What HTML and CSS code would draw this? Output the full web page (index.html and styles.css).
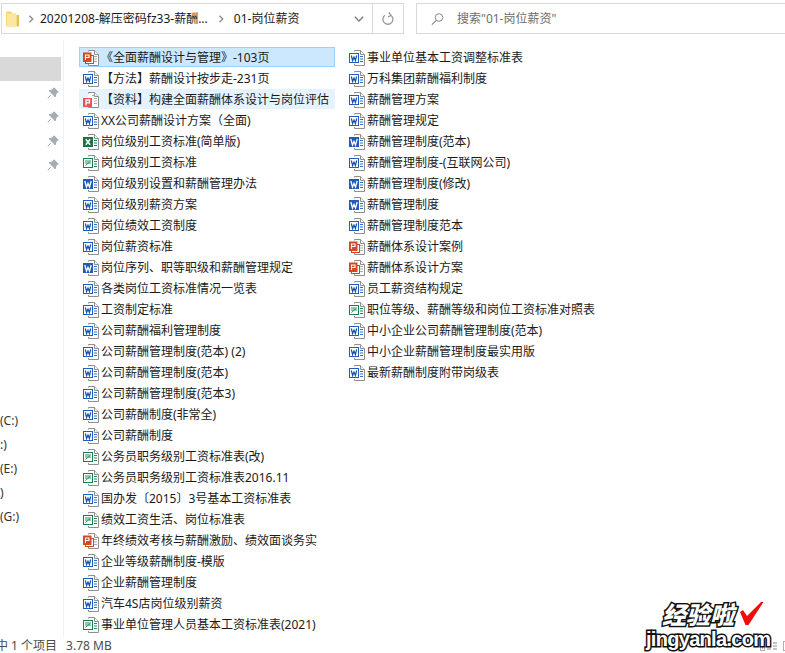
FILE: index.html
```html
<!DOCTYPE html>
<html lang="zh-CN">
<head>
<meta charset="utf-8">
<title>01-岗位薪资</title>
<link rel="stylesheet" href="styles.css">
</head>
<body>
<svg class="defs" width="0" height="0" aria-hidden="true">
  <defs>
    <g id="page">
      <path d="M5.500 1.500V.5H11.500L15.500 4.500V15.500H5.500V14" fill="#fff" stroke="#8f8f8f"/>
      <path d="M11.500 .5V4.500H15.500" fill="#f2f2f2" stroke="#8f8f8f"/>
    </g>
    <symbol id="wo" viewBox="0 0 16 16">
      <use href="#page"/>
      <path d="M11 6.500H14M11 9H14M11 11.500H14" stroke="#2b6fd0"/>
      <rect x=".5" y="3.500" width="9" height="9" fill="#fff" stroke="#1f5fc4"/>
      <path d="M2.300 5.500L3.600 10.500L5 7L6.400 10.500L7.700 5.500" fill="none" stroke="#1b4fa8" stroke-width="1.200"/>
    </symbol>
    <symbol id="ws" viewBox="0 0 16 16">
      <use href="#page"/>
      <path d="M11 6.500H14M11 9H14M11 11.500H14" stroke="#2b6fd0"/>
      <rect x="0" y="3" width="10" height="10" fill="#2559b8"/>
      <path d="M1.800 5L3.500 11L5 7.500L6.500 11L8.200 5" fill="none" stroke="#fff" stroke-width="1.300"/>
    </symbol>
    <symbol id="xs" viewBox="0 0 16 16">
      <use href="#page"/>
      <path d="M11 6.500H14M11 9H14M11 11.500H14" stroke="#1d8a52"/>
      <rect x="0" y="3" width="10" height="10" fill="#1b7343"/>
      <path d="M2.800 5.200L7.200 10.800M7.200 5.200L2.800 10.800" stroke="#fff" stroke-width="1.500"/>
    </symbol>
    <symbol id="xo" viewBox="0 0 16 16">
      <use href="#page"/>
      <path d="M11 6.500H14M11 9H14M11 11.500H14" stroke="#1d8a52"/>
      <rect x=".5" y="3.500" width="9" height="9" fill="#fff" stroke="#14804a"/>
      <path d="M2 6H8M2 8H8M2.500 10.500L7 6.500" fill="none" stroke="#2f8f5f"/>
    </symbol>
    <symbol id="pp" viewBox="0 0 16 16">
      <use href="#page"/>
      <path d="M11 6.500H14M11 9H14M11 11.500H14" stroke="#a9a9a9"/>
      <rect x="2.500" y="5.500" width="8" height="8" fill="#fff" stroke="#d24726"/>
      <rect x="0" y="2.500" width="8.500" height="9.500" fill="#cf4a25"/>
      <path d="M2.500 10V5H6V7.500H2.500" fill="none" stroke="#fff" stroke-width="1.100"/>
    </symbol>
    <symbol id="pr" viewBox="0 0 16 16">
      <use href="#page"/>
      <path d="M9 3.500H11M11 6.500H14M11 9H14M11 11.500H14" stroke="#a9a9a9"/>
      <rect x="0" y="6" width="9" height="9" fill="#e9505a"/>
      <path d="M3 13.500V8H6.500V10.800H3" fill="none" stroke="#fff" stroke-width="1.300"/>
    </symbol>
    <symbol id="pin" viewBox="0 0 12 12">
      <path d="M7 .8L11.200 5L9.800 5.600L8.600 7.800L8.300 9.800L2.200 3.700L4.200 3.400L6.400 2.200ZM4 7.800L.8 11.200" fill="#a3abb3" stroke="#a3abb3"/>
    </symbol>
    <symbol id="chev" viewBox="0 0 6 8">
      <path d="M1.500 .8L4.700 4L1.500 7.200" fill="none" stroke="#8a8a8a" stroke-width="1.300"/>
    </symbol>
  </defs>
</svg>

<div class="window">
  <header class="toolbar">
    <div class="address">
      <svg class="folder" viewBox="0 0 14 16" width="14" height="16">
        <path d="M0 1.500Q0 .5 1 .5H5L6.500 2.500H10V15.500H1Q0 15.500 0 14.500Z" fill="#f6d365"/>
        <path d="M.8 2.500H10.500V15H.8Z" fill="#fbe7a1"/>
        <path d="M10.500 4H13V15.500H10.500Z" fill="#e9bf4f"/>
      </svg>
      <svg class="crumb-sep first-sep" width="6" height="8"><use href="#chev"/></svg>
      <span class="crumb">20201208-解压密码fz33-薪酬...</span>
      <svg class="crumb-sep" width="6" height="8"><use href="#chev"/></svg>
      <span class="crumb">01-岗位薪资</span>
      <svg class="drop" viewBox="0 0 10 6" width="10" height="6"><path d="M.8 .8L5 5L9.200 .8" fill="none" stroke="#7b7b7b" stroke-width="1.300"/></svg>
      <div class="refresh">
        <svg viewBox="0 0 12 14" width="12" height="14"><path d="M8.800 3.200A5 5 0 1 1 3 3.200M6.800 .5L9 3.300L6 5" fill="none" stroke="#9a9a9a" stroke-width="1.300"/></svg>
      </div>
    </div>
    <div class="search">
      <svg viewBox="0 0 13 12" width="13" height="12"><circle cx="8" cy="4.500" r="3.800" fill="none" stroke="#8a8a8a"/><path d="M5.300 7.300L.8 11.700" stroke="#8a8a8a" stroke-width="1.100"/></svg>
      <span>搜索"01-岗位薪资"</span>
    </div>
  </header>

  <main class="body">
    <nav class="sidebar">
      <div class="side-item selected"></div>
      <div class="side-item"><svg class="pin" width="12" height="12"><use href="#pin"/></svg></div>
      <div class="side-item"><svg class="pin" width="12" height="12"><use href="#pin"/></svg></div>
      <div class="side-item"><svg class="pin" width="12" height="12"><use href="#pin"/></svg></div>
      <div class="side-item"><svg class="pin" width="12" height="12"><use href="#pin"/></svg></div>
      <div class="drives">
        <div class="side-item">(C:)</div>
        <div class="side-item">:)</div>
        <div class="side-item">(E:)</div>
        <div class="side-item">)</div>
        <div class="side-item">(G:)</div>
      </div>
    </nav>

    <section class="files">
      <div class="file focus"><svg width="16" height="16"><use href="#pp"/></svg><span>《全面薪酬设计与管理》-103页</span></div>
      <div class="file"><svg width="16" height="16"><use href="#wo"/></svg><span>【方法】薪酬设计按步走-231页</span></div>
      <div class="file hover"><svg width="16" height="16"><use href="#pr"/></svg><span>【资料】构建全面薪酬体系设计与岗位评估</span></div>
      <div class="file"><svg width="16" height="16"><use href="#wo"/></svg><span>XX公司薪酬设计方案（全面)</span></div>
      <div class="file"><svg width="16" height="16"><use href="#xs"/></svg><span>岗位级别工资标准(简单版)</span></div>
      <div class="file"><svg width="16" height="16"><use href="#xo"/></svg><span>岗位级别工资标准</span></div>
      <div class="file"><svg width="16" height="16"><use href="#ws"/></svg><span>岗位级别设置和薪酬管理办法</span></div>
      <div class="file"><svg width="16" height="16"><use href="#wo"/></svg><span>岗位级别薪资方案</span></div>
      <div class="file"><svg width="16" height="16"><use href="#wo"/></svg><span>岗位绩效工资制度</span></div>
      <div class="file"><svg width="16" height="16"><use href="#wo"/></svg><span>岗位薪资标准</span></div>
      <div class="file"><svg width="16" height="16"><use href="#ws"/></svg><span>岗位序列、职等职级和薪酬管理规定</span></div>
      <div class="file"><svg width="16" height="16"><use href="#wo"/></svg><span>各类岗位工资标准情况一览表</span></div>
      <div class="file"><svg width="16" height="16"><use href="#wo"/></svg><span>工资制定标准</span></div>
      <div class="file"><svg width="16" height="16"><use href="#wo"/></svg><span>公司薪酬福利管理制度</span></div>
      <div class="file"><svg width="16" height="16"><use href="#wo"/></svg><span>公司薪酬管理制度(范本) (2)</span></div>
      <div class="file"><svg width="16" height="16"><use href="#wo"/></svg><span>公司薪酬管理制度(范本)</span></div>
      <div class="file"><svg width="16" height="16"><use href="#wo"/></svg><span>公司薪酬管理制度(范本3)</span></div>
      <div class="file"><svg width="16" height="16"><use href="#wo"/></svg><span>公司薪酬制度(非常全)</span></div>
      <div class="file"><svg width="16" height="16"><use href="#wo"/></svg><span>公司薪酬制度</span></div>
      <div class="file"><svg width="16" height="16"><use href="#xo"/></svg><span>公务员职务级别工资标准表(改)</span></div>
      <div class="file"><svg width="16" height="16"><use href="#xo"/></svg><span>公务员职务级别工资标准表2016.11</span></div>
      <div class="file"><svg width="16" height="16"><use href="#wo"/></svg><span>国办发〔2015〕3号基本工资标准表</span></div>
      <div class="file"><svg width="16" height="16"><use href="#xo"/></svg><span>绩效工资生活、岗位标准表</span></div>
      <div class="file"><svg width="16" height="16"><use href="#pp"/></svg><span>年终绩效考核与薪酬激励、绩效面谈务实</span></div>
      <div class="file"><svg width="16" height="16"><use href="#wo"/></svg><span>企业等级薪酬制度-模版</span></div>
      <div class="file"><svg width="16" height="16"><use href="#wo"/></svg><span>企业薪酬管理制度</span></div>
      <div class="file"><svg width="16" height="16"><use href="#wo"/></svg><span>汽车4S店岗位级别薪资</span></div>
      <div class="file"><svg width="16" height="16"><use href="#xo"/></svg><span>事业单位管理人员基本工资标准表(2021)</span></div>

      <div class="file"><svg width="16" height="16"><use href="#wo"/></svg><span>事业单位基本工资调整标准表</span></div>
      <div class="file"><svg width="16" height="16"><use href="#wo"/></svg><span>万科集团薪酬福利制度</span></div>
      <div class="file"><svg width="16" height="16"><use href="#wo"/></svg><span>薪酬管理方案</span></div>
      <div class="file"><svg width="16" height="16"><use href="#wo"/></svg><span>薪酬管理规定</span></div>
      <div class="file"><svg width="16" height="16"><use href="#ws"/></svg><span>薪酬管理制度(范本)</span></div>
      <div class="file"><svg width="16" height="16"><use href="#wo"/></svg><span>薪酬管理制度-(互联网公司)</span></div>
      <div class="file"><svg width="16" height="16"><use href="#ws"/></svg><span>薪酬管理制度(修改)</span></div>
      <div class="file"><svg width="16" height="16"><use href="#ws"/></svg><span>薪酬管理制度</span></div>
      <div class="file"><svg width="16" height="16"><use href="#wo"/></svg><span>薪酬管理制度范本</span></div>
      <div class="file"><svg width="16" height="16"><use href="#pp"/></svg><span>薪酬体系设计案例</span></div>
      <div class="file"><svg width="16" height="16"><use href="#pp"/></svg><span>薪酬体系设计方案</span></div>
      <div class="file"><svg width="16" height="16"><use href="#wo"/></svg><span>员工薪资结构规定</span></div>
      <div class="file"><svg width="16" height="16"><use href="#xo"/></svg><span>职位等级、薪酬等级和岗位工资标准对照表</span></div>
      <div class="file"><svg width="16" height="16"><use href="#wo"/></svg><span>中小企业公司薪酬管理制度(范本)</span></div>
      <div class="file"><svg width="16" height="16"><use href="#wo"/></svg><span>中小企业薪酬管理制度最实用版</span></div>
      <div class="file"><svg width="16" height="16"><use href="#wo"/></svg><span>最新薪酬制度附带岗级表</span></div>
    </section>
  </main>

  <footer class="status">
    <span class="selected-count">中 1 个项目</span>
    <span>3.78 MB</span>
    <div class="views">
      <svg viewBox="0 0 17 10" width="17" height="10"><rect x=".5" y=".5" width="4" height="9" fill="none" stroke="#b0b0b0"/><path d="M2 3H3M2 7H3" stroke="#c8503c"/><path d="M7 2H11M13 2H17M7 5H11M13 5H17M7 8H11M13 8H17" stroke="#888"/></svg>
      <span class="view-box"></span>
    </div>
  </footer>

  <div class="watermark">
    <div class="wm-cn">经验啦</div>
    <div class="wm-en">jingyanla.com</div>
    <svg class="wm-check" viewBox="0 0 24 24" width="24" height="24"><path d="M0 11L3 9L7 15L21 1L23.500 1L8.500 24L5.500 24Z" fill="#f00d0d"/></svg>
  </div>
</div>
</body>
</html>
```
FILE: styles.css
```css
* {
  box-sizing: border-box;
}

html,
body {
  margin: 0;
  height: 653px;
  overflow: hidden;
  background: #fff;
}

body {
  font-family: "Noto Sans", "Noto Sans CJK SC", sans-serif;
  font-size: 12px;
  line-height: 16px;
  color: #1a1a1a;
}

.defs {
  position: absolute;
}

.window {
  position: relative;
  display: flex;
  flex-direction: column;
  width: 785px;
  height: 653px;
  overflow: hidden;
}

.toolbar {
  display: flex;
  flex: none;
  height: 40px;
  padding: 3px 0 6px 1px;
  gap: 12px;
}

.address {
  display: flex;
  align-items: center;
  width: 403px;
  height: 31px;
  padding-left: 4px;
  border: 1px solid #d9d9d9;
}

.folder {
  flex: none;
}

.crumb-sep {
  flex: none;
  margin: 0 10px;
}

.first-sep {
  margin: 0 6px 0 8px;
}

.crumb {
  white-space: nowrap;
}

.drop {
  margin-left: auto;
  margin-right: 8px;
}

.refresh {
  display: flex;
  align-items: center;
  justify-content: center;
  width: 31px;
  height: 100%;
  border-left: 1px solid #d9d9d9;
}

.search {
  display: flex;
  align-items: center;
  flex: 1;
  height: 31px;
  padding-left: 14px;
  gap: 13px;
  border: 1px solid #d9d9d9;
  border-right: 0;
  color: #6d6d6d;
}

.body {
  display: flex;
  flex: 1;
  min-height: 0;
}

.sidebar {
  flex: none;
  width: 64px;
  padding: 17px 2px 0 0;
  border-right: 1px solid #f0f0f0;
  color: #333;
  overflow: hidden;
}

.side-item {
  display: flex;
  align-items: center;
  justify-content: flex-end;
  height: 24px;
  padding-right: 2px;
}

.side-item.selected {
  background: #d9d9d9;
}

.drives {
  margin-top: 231px;
}

.drives .side-item {
  justify-content: flex-start;
  padding: 1px 0 0;
}

.files {
  display: grid;
  grid-auto-flow: column;
  grid-template-rows: repeat(28, 20px);
  grid-auto-columns: 256px;
  row-gap: 1px;
  column-gap: 10px;
  margin-left: 15px;
  padding-top: 7px;
}

.file {
  display: flex;
  align-items: center;
  gap: 2px;
  padding: 2px 0 0 4px;
  white-space: nowrap;
}

.file svg {
  flex: none;
}

.file.focus {
  background: #cce8ff;
  box-shadow: inset 0 0 0 1px #99d1ff;
}

.file.hover {
  background: #e5f3ff;
}

.status {
  display: flex;
  align-items: center;
  flex: none;
  height: 16px;
  padding-top: 2px;
  gap: 9px;
  color: #4d4d4d;
}

.selected-count {
  margin-left: -4px;
}

.views {
  display: flex;
  align-items: center;
  gap: 6px;
  margin-left: auto;
  margin-right: -4px;
}

.view-box {
  width: 6px;
  height: 10px;
  border: 1px solid #b0b0b0;
}

.watermark {
  position: absolute;
  left: 640px;
  top: 598px;
  width: 140px;
  height: 52px;
}

.wm-cn {
  position: absolute;
  left: 22px;
  top: 2px;
  font-family: "Noto Sans CJK SC", sans-serif;
  font-size: 24px;
  font-weight: 900;
  font-style: italic;
  line-height: 28px;
  color: #fff;
  -webkit-text-stroke: 3px #111;
  paint-order: stroke fill;
}

.wm-en {
  position: absolute;
  left: 6px;
  top: 31px;
  font-family: "Liberation Sans", sans-serif;
  font-size: 20px;
  font-weight: 700;
  line-height: 20px;
  letter-spacing: -0.7px;
  color: #fff;
  -webkit-text-stroke: 3px #111;
  paint-order: stroke fill;
}

.wm-check {
  position: absolute;
  left: 100px;
  top: 3px;
}
```
